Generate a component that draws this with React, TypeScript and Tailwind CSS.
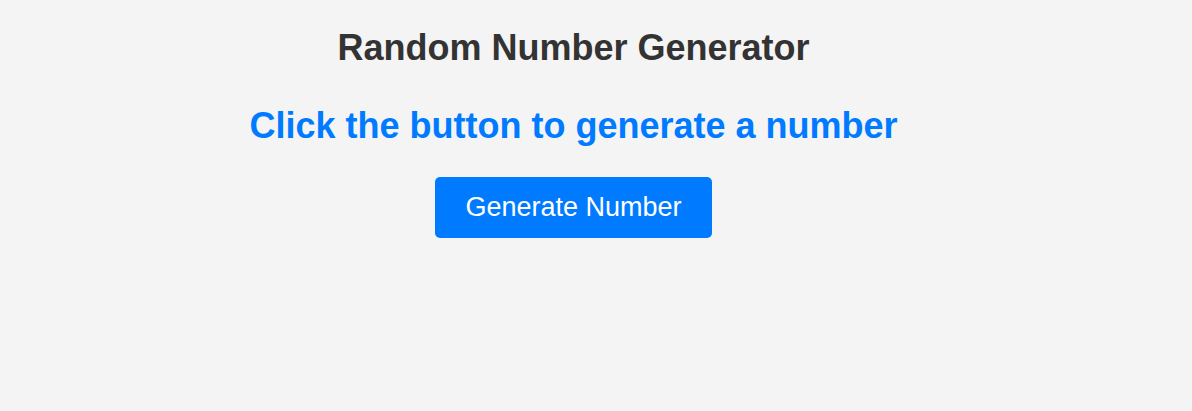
import { useState } from 'react';

export default function App() {
  const [value, setValue] = useState<number | null>(null);

  return (
    <div className="min-h-screen bg-[#f4f4f4] font-['Liberation_Sans',Arial,sans-serif]">
      <div className="w-[1147px] pt-[27px] text-center">
        <h1 className="text-[36px] font-bold leading-[41px] text-[#333333]">
          Random Number Generator
        </h1>
        <p className="mt-[37px] text-[36px] font-bold leading-[41px] text-[#007bff]">
          {value === null ? 'Click the button to generate a number' : value}
        </p>
        <div className="mt-[31px] flex justify-center">
          <button
            onClick={() => setValue(Math.floor(Math.random() * 100) + 1)}
            className="rounded-[5px] bg-[#007bff] px-[30px] py-[15px] text-[27px] leading-[31px] text-white"
          >
            Generate Number
          </button>
        </div>
      </div>
    </div>
  );
}
